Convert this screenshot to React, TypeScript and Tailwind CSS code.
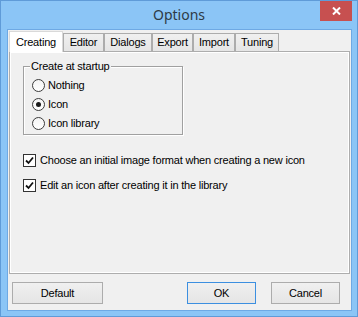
const Radio = ({ checked, label }: { checked?: boolean; label: string }) => (
  <div className="flex items-center gap-[3px] h-[19px]">
    <div className="w-[13px] h-[13px] rounded-full border border-[#3c3c3c] bg-gradient-to-b from-[#f4f4f4] to-[#ffffff] flex items-center justify-center">
      {checked && <div className="w-[5px] h-[5px] rounded-full bg-[#1a1a1a]" />}
    </div>
    <span>{label}</span>
  </div>
);

const Check = ({ label }: { label: string }) => (
  <div className="flex items-center gap-[4px] h-[17px]">
    <div className="w-[13px] h-[13px] border border-[#333] bg-white flex items-center justify-center">
      <svg width="9" height="9" viewBox="0 0 9 9">
        <path d="M1 4.5 L3.5 7 L8 1.5" fill="none" stroke="#111" strokeWidth="1.8" />
      </svg>
    </div>
    <span>{label}</span>
  </div>
);

const tabs = [
  { name: 'Editor', w: 'w-[41px]' },
  { name: 'Dialogs', w: 'w-[48px]' },
  { name: 'Export', w: 'w-[41px]' },
  { name: 'Import', w: 'w-[42px]' },
  { name: 'Tuning', w: 'w-[44px]' },
];

export default function App() {
  return (
    <div className="w-[358px] h-[317px] border border-[#5f9bd8] bg-[#8bc5f6] relative flex flex-col font-['Liberation_Sans',Arial,sans-serif] text-[11px] tracking-[-0.2px] text-black leading-[13px]">
      {/* title bar */}
      <div className="h-[28px] flex items-center justify-center">
        <span className="font-['Noto_Sans',sans-serif] text-[14px] tracking-normal text-[#2e3a45] leading-none pb-[1px]">Options</span>
      </div>
      <div className="absolute top-0 right-[5px] w-[32px] h-[20px] bg-[#c75050] flex items-center justify-center">
        <svg width="9" height="8" viewBox="0 0 9 8">
          <path d="M1 0.5 L8 7.5 M8 0.5 L1 7.5" stroke="#fff" strokeWidth="2" />
        </svg>
      </div>

      {/* client area */}
      <div className="ml-[6px] w-[345px] h-[282px] border border-[#6ea9e4] bg-[#f0f0f0] flex flex-col">
        {/* tabs */}
        <div className="flex items-end h-[20px] mt-[1px] ml-[1px]">
          <div className="w-[54px] shrink-0 h-[21px] -mb-px relative z-10 bg-white border-l border-t border-r border-[#d9d9d9] flex items-center justify-center">
            Creating
          </div>
          {tabs.map((t) => (
            <div
              key={t.name}
              className={`${t.w} shrink-0 h-[18px] bg-gradient-to-b from-[#f0f0f0] to-[#e5e5e5] border-l border-t border-r border-[#acacac] flex items-center justify-center`}
            >
              {t.name}
            </div>
          ))}
        </div>

        {/* panel */}
        <div className="ml-[1px] w-[341px] h-[223px] border border-[#adadad] shadow-[inset_1px_1px_0_#fff,inset_-1px_-1px_0_#fff] flex flex-col">
          <div className="relative ml-[13px] mt-[14px] w-[160px] h-[69px] border border-[#a0a0a0] shadow-[1px_1px_0_#fff,inset_1px_1px_0_#fff] pt-[9px] pl-[8px]">
            <span className="absolute -top-[7px] left-[6px] px-px bg-[#f0f0f0]">Create at startup</span>
            <Radio label="Nothing" />
            <Radio label="Icon" checked />
            <Radio label="Icon library" />
          </div>
          <div className="ml-[13px] mt-[17px] flex flex-col gap-[8px]">
            <Check label="Choose an initial image format when creating a new icon" />
            <Check label="Edit an icon after creating it in the library" />
          </div>
        </div>

        {/* buttons */}
        <div className="flex mt-[8px] ml-[4px]">
          <button className="shrink-0 w-[91px] h-[22px] border border-[#acacac] bg-gradient-to-b from-[#f0f0f0] to-[#e5e5e5]">
            Default
          </button>
          <button className="shrink-0 ml-[84px] w-[69px] h-[22px] border border-[#3c8fe0] bg-gradient-to-b from-[#f0f0f0] to-[#e5e5e5]">
            OK
          </button>
          <button className="shrink-0 ml-[15px] w-[69px] h-[22px] border border-[#acacac] bg-gradient-to-b from-[#f0f0f0] to-[#e5e5e5]">
            Cancel
          </button>
        </div>
      </div>
    </div>
  );
}
